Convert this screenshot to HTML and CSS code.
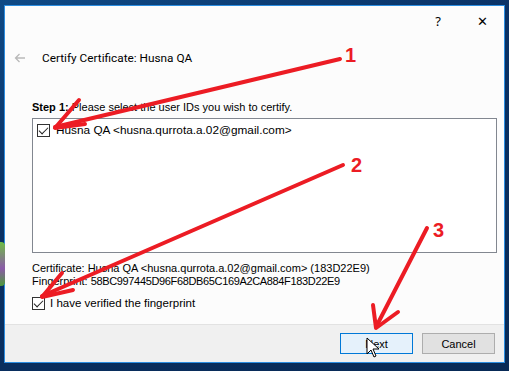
FILE: index.html
```html
<!DOCTYPE html>
<html lang="en">
<head>
    <meta charset="UTF-8">
    <title>Certify Certificate</title>
    <link rel="stylesheet" href="styles.css">
</head>
<body>
    <div class="desktop-icon"></div>

    <div class="window">
        <div class="titlebar">
            <span class="help">?</span>
            <span class="close">&#x2715;</span>
        </div>

        <div class="header">
            <svg class="back" width="12" height="10" viewBox="0 0 12 10">
                <path d="M11 5 H1.5 M5.5 1 L1.5 5 L5.5 9" stroke="#b9b9b9" stroke-width="1.3" fill="none"/>
            </svg>
            <span class="title">Certify Certificate: Husna QA</span>
        </div>

        <div class="content">
            <p class="step"><b>Step 1:</b> Please select the user IDs you wish to certify.</p>

            <div class="uidlist">
                <label class="check">
                    <span class="box checked"></span>
                    Husna QA &lt;husna.qurrota.a.02@gmail.com&gt;
                </label>
            </div>

            <div class="details">
                <p>Certificate: Husna QA &lt;husna.qurrota.a.02@gmail.com&gt; (183D22E9)</p>
                <p>Fingerprint: <span class="hex">58BC997445D96F68DB65C169A2CA884F183D22E9</span></p>
            </div>

            <label class="check verify">
                <span class="box checked"></span>
                I have verified the fingerprint
            </label>
        </div>

        <div class="footer">
            <button class="btn default">Next</button>
            <button class="btn">Cancel</button>
        </div>
    </div>

    <!-- annotations drawn over the screenshot -->
    <svg class="marks" width="509" height="371" viewBox="0 0 509 371">
        <g stroke="#ec1c24" stroke-width="4" stroke-linecap="round" stroke-linejoin="round" fill="none">
            <line x1="340" y1="59" x2="55" y2="127"/>
            <polyline points="79,100 55,128 85,124"/>
            <line x1="343" y1="165" x2="42" y2="296"/>
            <polyline points="62,273 42,297 73,290"/>
            <line x1="427" y1="228" x2="376" y2="327"/>
            <polyline points="373,305 376,328 398,312"/>
        </g>
        <text x="345" y="62" class="num">1</text>
        <text x="351" y="172" class="num">2</text>
        <text x="433" y="237" class="num">3</text>
        <path d="M367 338 L367 354 L371 350 L374 357 L376 356 L373 349 L379 349 Z" fill="#fff" stroke="#000" stroke-width="1"/>
    </svg>
</body>
</html>
```

FILE: styles.css
```css
*{
    margin: 0;
    padding: 0;
    box-sizing: border-box;
}

body{
    width: 509px;
    height: 371px;
    overflow: hidden;
    background: linear-gradient(160deg, #0f4a86 0%, #0a3266 35%, #082a56 100%);
    font-family: 'Liberation Sans', Arial, sans-serif;
    font-size: 11px;
    color: #000;
    position: relative;
}

.desktop-icon{
    position: absolute;
    left: -6px;
    top: 242px;
    width: 11px;
    height: 44px;
    border-radius: 4px;
    background: linear-gradient(180deg, #6fbe44, #8a5aa8 60%, #4c9a3a);
}

.window{
    margin: 5px 0 0 4px;
    width: 501px;
    height: 358px;
    background: #fcfcfc;
    border: 1px solid #2b8de0;
    display: flex;
    flex-direction: column;
}

.titlebar{
    height: 30px;
    display: flex;
    justify-content: flex-end;
    align-items: center;
    padding-right: 16px;
    gap: 36px;
    font-family: 'Noto Sans', sans-serif;
    font-size: 13px;
}

.close{
    font-weight: 300;
}

.header{
    height: 48px;
    display: flex;
    align-items: center;
    padding: 0 0 4px 9px;
}

.back{
    margin-right: 16px;
}

.title{
    font-family: Roboto, 'Noto Sans', sans-serif;
    font-size: 11.8px;
}

.content{
    flex: 1;
    padding: 16px 7px 0 27px;
}

.step{
    height: 14px;
    line-height: 14px;
}

.uidlist{
    margin-top: 4px;
    height: 135px;
    border: 1px solid #828790;
    background: #fff;
    padding: 4px 4px;
}

.check{
    display: flex;
    align-items: center;
    gap: 6px;
    height: 14px;
}

.box{
    width: 13px;
    height: 13px;
    border: 1px solid #333;
    background: #fff;
    position: relative;
}

.box.checked::after{
    content: "";
    position: absolute;
    left: 3px;
    top: 0px;
    width: 4px;
    height: 8px;
    border: solid #222;
    border-width: 0 1.5px 1.5px 0;
    transform: rotate(45deg);
}

.uidlist .check{
    font-size: 11.8px;
}

.details{
    margin-top: 9px;
    line-height: 13px;
}

.hex{
    letter-spacing: -0.35px;
}

.verify{
    margin-top: 8px;
    font-size: 11.5px;
    gap: 5px;
}

.footer{
    height: 38px;
    background: #f0f0f0;
    border-top: 1px solid #e2e2e2;
    display: flex;
    justify-content: flex-end;
    align-items: center;
    gap: 9px;
    padding-right: 9px;
}

.btn{
    width: 73px;
    height: 21px;
    border: 1px solid #adadad;
    background: #e1e1e1;
    font-family: 'Liberation Sans', Arial, sans-serif;
    font-size: 11px;
}

.btn.default{
    border-color: #0078d7;
    background: #e5f1fb;
}

.marks{
    position: absolute;
    left: 0;
    top: 0;
}

.num{
    fill: #ec1c24;
    font-family: 'Liberation Sans', Arial, sans-serif;
    font-weight: bold;
    font-size: 20px;
}
```
